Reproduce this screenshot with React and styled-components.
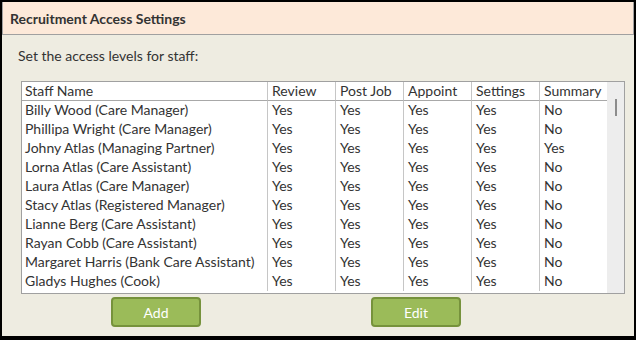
import React from "react";
import styled, { createGlobalStyle } from "styled-components";

const Global = createGlobalStyle`
  html, body { margin: 0; padding: 0; background: #ffffff; }
  * { box-sizing: border-box; }
`;

const Frame = styled.div`
  width: 636px;
  height: 340px;
  border-style: solid;
  border-color: #000;
  border-width: 2px 2px 4px 2px;
  background: #eeece1;
  display: flex;
  flex-direction: column;
  font-family: Lato, "Liberation Sans", sans-serif;
  color: #333;
`;

const Header = styled.div`
  height: 33px;
  background: #fde9d9;
  border: 1px solid #a0a0a0;
  border-top: none;
  display: flex;
  align-items: center;
  padding-left: 7px;
  font-weight: 700;
  font-size: 14px;
  color: #333;
`;

const Body = styled.div`
  flex: 1;
  display: flex;
  flex-direction: column;
  padding: 11px 0 0 16px;
`;

const Intro = styled.div`
  font-size: 14px;
  height: 20px;
  line-height: 20px;
  margin-bottom: 15px;
`;

const TableFrame = styled.div`
  width: 604px;
  height: 213px;
  margin-left: 3px;
  border: 1px solid #a0a0a0;
  background: #fff;
  display: flex;
`;

const Grid = styled.div`
  display: grid;
  grid-template-columns: 245px repeat(5, 68px);
  grid-auto-rows: 19px;
  align-content: start;
  width: 585px;
`;

const Cell = styled.div`
  font-size: 14px;
  padding-left: ${(p) => (p.$first ? 3 : 4)}px;
  padding-top: ${(p) => (p.$head ? 1 : 0)}px;
  white-space: nowrap;
  overflow: hidden;
  border-left: ${(p) => (p.$first ? "none" : "1px solid #c6c6c6")};
  border-bottom: ${(p) => (p.$head ? "1px solid #a8a8a8" : "none")};
  line-height: ${(p) => (p.$head ? 16 : 17)}px;
  color: #333;
`;

const Scrollbar = styled.div`
  width: 17px;
  background: #ededed;
  position: relative;
`;

const Thumb = styled.div`
  position: absolute;
  left: 8px;
  top: 17px;
  width: 2px;
  height: 17px;
  background: #8c8c8c;
`;

const ButtonRow = styled.div`
  display: flex;
  gap: 170px;
  padding-left: 93px;
  margin-top: 3px;
`;

const Button = styled.button`
  width: 90px;
  height: 30px;
  background: #9bbb59;
  border: 2px solid #76923c;
  border-radius: 4px;
  color: #fff;
  font-family: Lato, "Liberation Sans", sans-serif;
  font-size: 14px;
  padding: 0;
  cursor: pointer;
`;

const columns = ["Staff Name", "Review", "Post Job", "Appoint", "Settings", "Summary"];

const rows = [
  ["Billy Wood (Care Manager)", "Yes", "Yes", "Yes", "Yes", "No"],
  ["Phillipa Wright (Care Manager)", "Yes", "Yes", "Yes", "Yes", "No"],
  ["Johny Atlas (Managing Partner)", "Yes", "Yes", "Yes", "Yes", "Yes"],
  ["Lorna Atlas (Care Assistant)", "Yes", "Yes", "Yes", "Yes", "No"],
  ["Laura Atlas (Care Manager)", "Yes", "Yes", "Yes", "Yes", "No"],
  ["Stacy Atlas (Registered Manager)", "Yes", "Yes", "Yes", "Yes", "No"],
  ["Lianne Berg (Care Assistant)", "Yes", "Yes", "Yes", "Yes", "No"],
  ["Rayan Cobb (Care Assistant)", "Yes", "Yes", "Yes", "Yes", "No"],
  ["Margaret Harris (Bank Care Assistant)", "Yes", "Yes", "Yes", "Yes", "No"],
  ["Gladys Hughes (Cook)", "Yes", "Yes", "Yes", "Yes", "No"],
];

export default function App() {
  return (
    <>
      <Global />
      <Frame>
        <Header>Recruitment Access Settings</Header>
        <Body>
          <Intro>Set the access levels for staff:</Intro>
          <TableFrame>
            <Grid>
              {columns.map((c, i) => (
                <Cell key={c} $head $first={i === 0}>{c}</Cell>
              ))}
              {rows.map((r, ri) =>
                r.map((v, ci) => (
                  <Cell key={ri + "-" + ci} $first={ci === 0}>{v}</Cell>
                ))
              )}
            </Grid>
            <Scrollbar>
              <Thumb />
            </Scrollbar>
          </TableFrame>
          <ButtonRow>
            <Button>Add</Button>
            <Button>Edit</Button>
          </ButtonRow>
        </Body>
      </Frame>
    </>
  );
}
